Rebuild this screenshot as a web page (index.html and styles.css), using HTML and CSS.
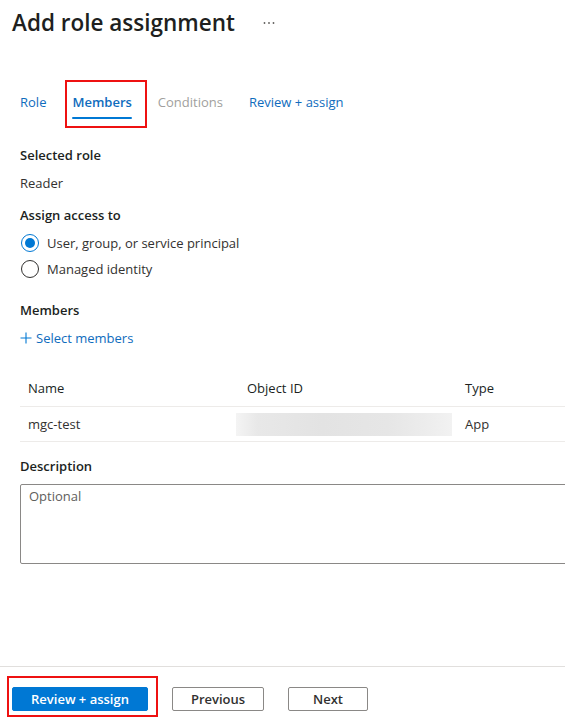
FILE: index.html
```html
<!DOCTYPE html>
<html lang="en">
<head>
<meta charset="utf-8">
<title>Add role assignment</title>
<link rel="stylesheet" href="styles.css">
</head>
<body>
<div class="page">
  <header class="header">
    <h1 class="title">Add role assignment</h1>
    <span class="more" aria-label="More">
      <svg width="12" height="4" viewBox="0 0 12 4"><circle cx="1.5" cy="2" r="0.9" fill="#605e5c"/><circle cx="6" cy="2" r="0.9" fill="#605e5c"/><circle cx="10.5" cy="2" r="0.9" fill="#605e5c"/></svg>
    </span>
  </header>

  <nav class="tabs">
    <span class="tab tab-link">Role</span>
    <span class="tab tab-active">Members</span>
    <span class="tab tab-disabled">Conditions</span>
    <span class="tab tab-link">Review + assign</span>
  </nav>

  <main class="content">
    <div class="label sel-role">Selected role</div>
    <div class="value">Reader</div>

    <div class="label assign">Assign access to</div>
    <div class="radios">
      <div class="radio-row"><span class="radio radio-on"></span><span>User, group, or service principal</span></div>
      <div class="radio-row"><span class="radio"></span><span>Managed identity</span></div>
    </div>

    <div class="label members">Members</div>
    <div class="add-link">
      <svg class="plus" width="12" height="12" viewBox="0 0 12 12"><path d="M6 0.5V11.5M0.5 6H11.5" stroke="#0078d4" stroke-width="1.1" fill="none"/></svg>
      <span>Select members</span>
    </div>

    <div class="table">
      <div class="trow thead">
        <div class="cell c1">Name</div>
        <div class="cell c2">Object ID</div>
        <div class="cell c3">Type</div>
      </div>
      <div class="trow tbody">
        <div class="cell c1">mgc-test</div>
        <div class="cell c2"><div class="blur"></div></div>
        <div class="cell c3">App</div>
      </div>
    </div>

    <div class="label desc">Description</div>
    <div class="textarea">Optional</div>
  </main>

  <footer class="footer">
    <span class="btn-wrap"><button class="btn btn-primary">Review + assign</button></span>
    <button class="btn btn-default btn-prev">Previous</button>
    <button class="btn btn-default btn-next">Next</button>
  </footer>
</div>
</body>
</html>
```

FILE: styles.css
```css
html, body {
  margin: 0;
  padding: 0;
  background: #ffffff;
}

body {
  font-family: "Segoe UI", "Open Sans", "Noto Sans", sans-serif;
  font-size: 13px;
  color: #323130;
  overflow: hidden;
}

.page {
  height: 717px;
  display: flex;
  flex-direction: column;
  overflow: hidden;
}

.header {
  display: flex;
  align-items: center;
  padding: 7px 0 0 12px;
  height: 32px;
}

.title {
  margin: 0;
  font-size: 22.5px;
  font-weight: 600;
  line-height: 32px;
  color: #201f1e;
}

.more {
  display: flex;
  margin-left: 28px;
}

.tabs {
  display: flex;
  padding-left: 20px;
  margin-top: 53px;
  gap: 26px;
}

.tab {
  position: relative;
  line-height: 20px;
  padding-bottom: 7px;
  font-size: 13px;
}

.tab-link {
  color: #0f6cbd;
}

.tab-disabled {
  color: #a19f9d;
}

.tab-active {
  color: #0f6cbd;
  font-weight: 600;
}

.tab-active::after {
  content: "";
  position: absolute;
  left: 0;
  right: 0;
  bottom: 0;
  height: 2px;
  background: #0078d4;
  border-radius: 1px;
}

.tab-active::before {
  content: "";
  position: absolute;
  top: -12px;
  left: -7px;
  right: -15px;
  bottom: -9px;
  border: 2px solid #ee1111;
}

.content {
  flex: 1;
  padding-left: 20px;
  display: flex;
  flex-direction: column;
  overflow: hidden;
}

.label {
  font-weight: 600;
  line-height: 20px;
  color: #201f1e;
}

.value {
  line-height: 20px;
  margin-top: 8px;
}

.sel-role { margin-top: 26px; }
.assign { margin-top: 12px; }
.members { margin-top: 21px; }
.desc { margin-top: 14px; }

.radios {
  display: flex;
  flex-direction: column;
  gap: 6px;
  margin-top: 8px;
}

.radio-row {
  display: flex;
  align-items: center;
  gap: 8px;
  line-height: 20px;
  padding-left: 1px;
}

.radio {
  width: 16px;
  height: 16px;
  border: 1px solid #323130;
  border-radius: 50%;
  display: flex;
  align-items: center;
  justify-content: center;
  box-sizing: content-box;
}

.radio-on {
  border-color: #0078d4;
}

.radio-on::after {
  content: "";
  width: 10px;
  height: 10px;
  border-radius: 50%;
  background: #0078d4;
}

.add-link {
  display: flex;
  align-items: center;
  gap: 4px;
  margin-top: 8px;
  line-height: 20px;
  color: #0f6cbd;
}

.table {
  margin-top: 22px;
  margin-right: -20px;
}

.trow {
  display: flex;
  border-bottom: 1px solid #edebe9;
}

.thead {
  height: 36px;
  align-items: center;
  color: #201f1e;
}

.tbody {
  height: 34px;
  align-items: center;
}

.cell {
  padding: 0 8px;
  box-sizing: border-box;
}

.c1 { width: 219px; }
.c2 { width: 218px; }
.c3 { flex: 1; }

.blur {
  margin-left: -11px;
  width: 216px;
  height: 23px;
  background: linear-gradient(90deg, #f4f4f4 0%, #e8e8e8 10%, #e3e3e3 40%, #e6e6e6 70%, #eeeeee 92%, #f2f2f2 100%);
}

.textarea {
  margin-top: 8px;
  margin-right: -40px;
  height: 80px;
  border: 1px solid #8a8886;
  border-radius: 2px;
  padding: 3px 8px;
  box-sizing: border-box;
  color: #605e5c;
  line-height: 16px;
}

.footer {
  border-top: 1px solid #e1dfdd;
  height: 51px;
  display: flex;
  align-items: flex-start;
  padding: 20px 0 0 12px;
  box-sizing: border-box;
}

.btn {
  font-family: inherit;
  font-size: 13px;
  font-weight: 600;
  height: 24px;
  border-radius: 2px;
  padding: 0;
  margin: 0;
  cursor: pointer;
  line-height: 20px;
}

.btn-wrap {
  position: relative;
  display: flex;
}

.btn-wrap::before {
  content: "";
  position: absolute;
  top: -11px;
  left: -5px;
  right: -10px;
  bottom: -6px;
  border: 2px solid #ee1111;
  pointer-events: none;
}

.btn-primary {
  width: 136px;
  background: #0078d4;
  border: 1px solid #0078d4;
  color: #ffffff;
}

.btn-default {
  background: #ffffff;
  border: 1px solid #8a8886;
  color: #323130;
}

.btn-prev {
  width: 92px;
  margin-left: 24px;
}

.btn-next {
  width: 80px;
  margin-left: 24px;
}
```
